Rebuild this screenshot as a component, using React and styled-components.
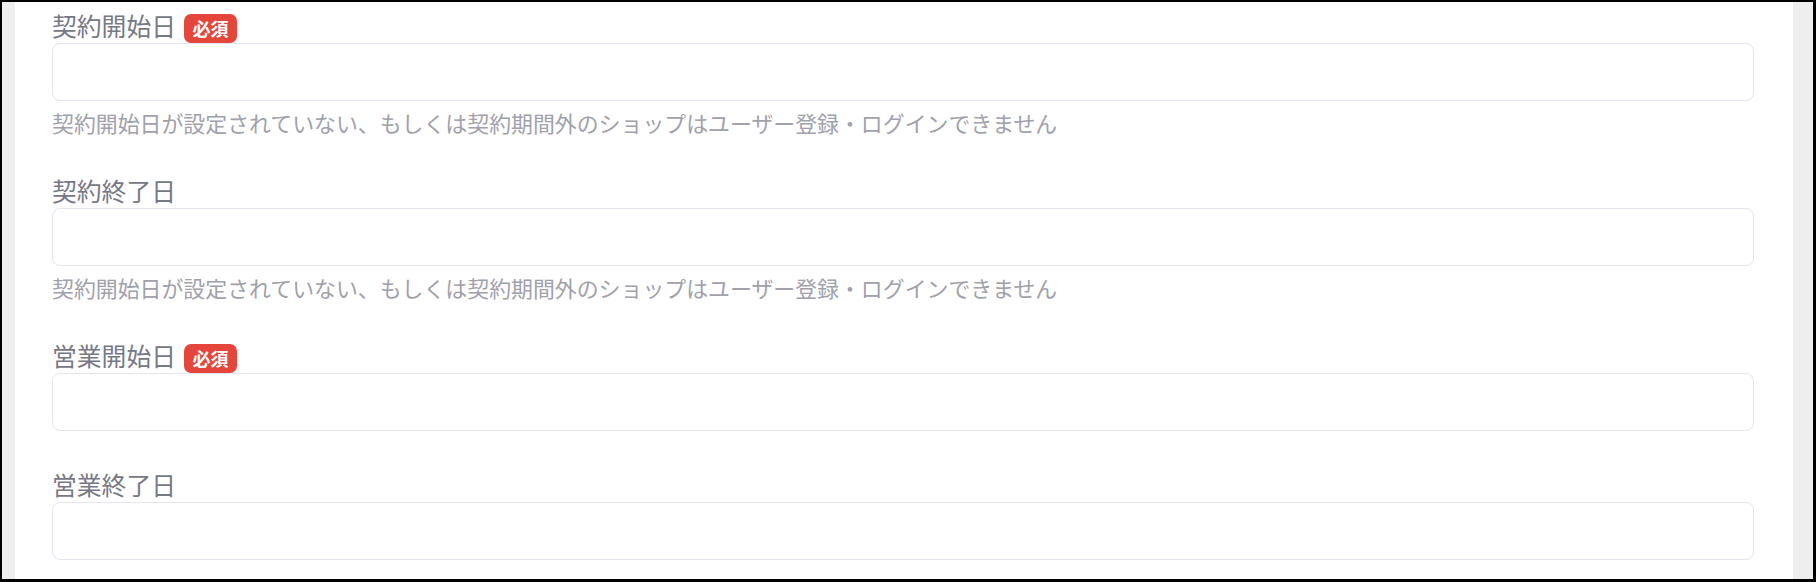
import React from "react";
import styled, { createGlobalStyle } from "styled-components";

const Global = createGlobalStyle`
  html, body { margin: 0; padding: 0; background: #000; }
  * { box-sizing: border-box; }
`;

const FONT = `"Noto Sans CJK JP", "Noto Sans", sans-serif`;

const Frame = styled.div`
  width: 1816px;
  height: 582px;
  overflow: hidden;
  border-style: solid;
  border-color: #000;
  border-width: 2px 3px 3px 2px;
  background: #eeeeee;
  display: flex;
  padding: 0 20px 0 13px;
`;

const Panel = styled.div`
  flex: 1;
  background: #ffffff;
  padding: 11px 39px 0 37px;
  font-family: ${FONT};
`;

const Field = styled.div`
  margin-bottom: 41px;
`;

const LabelRow = styled.div`
  height: 30px;
  display: flex;
  align-items: center;
  gap: 8px;
`;

const LabelText = styled.span`
  font-size: 24.8px;
  line-height: 25px;
  color: #767886;
  margin-bottom: 6px;
`;

const Badge = styled.span`
  height: 29px;
  width: 53px;
  border-radius: 7px;
  background: #e4463b;
  color: #fff;
  font-weight: 700;
  font-size: 18px;
  display: inline-flex;
  align-items: center;
  justify-content: center;
`;

const Input = styled.input`
  display: block;
  width: 100%;
  height: 58px;
  border: 1px solid #e3e5f1;
  border-radius: 8px;
  background: #fff;
  outline: none;
  padding: 0 16px;
  font-family: ${FONT};
  font-size: 20px;
`;

const Help = styled.p`
  margin: 8px 0 0;
  font-size: 21.9px;
  line-height: 28px;
  color: #a0a1ab;
`;

const HELP = "契約開始日が設定されていない、もしくは契約期間外のショップはユーザー登録・ログインできません";

const fields = [
  { label: "契約開始日", required: true, help: HELP },
  { label: "契約終了日", required: false, help: HELP },
  { label: "営業開始日", required: true },
  { label: "営業終了日", required: false },
];

export default function App() {
  return (
    <>
      <Global />
      <Frame>
        <Panel>
          {fields.map((f) => (
            <Field key={f.label}>
              <LabelRow>
                <LabelText>{f.label}</LabelText>
                {f.required && <Badge>必須</Badge>}
              </LabelRow>
              <Input type="text" />
              {f.help && <Help>{f.help}</Help>}
            </Field>
          ))}
        </Panel>
      </Frame>
    </>
  );
}
